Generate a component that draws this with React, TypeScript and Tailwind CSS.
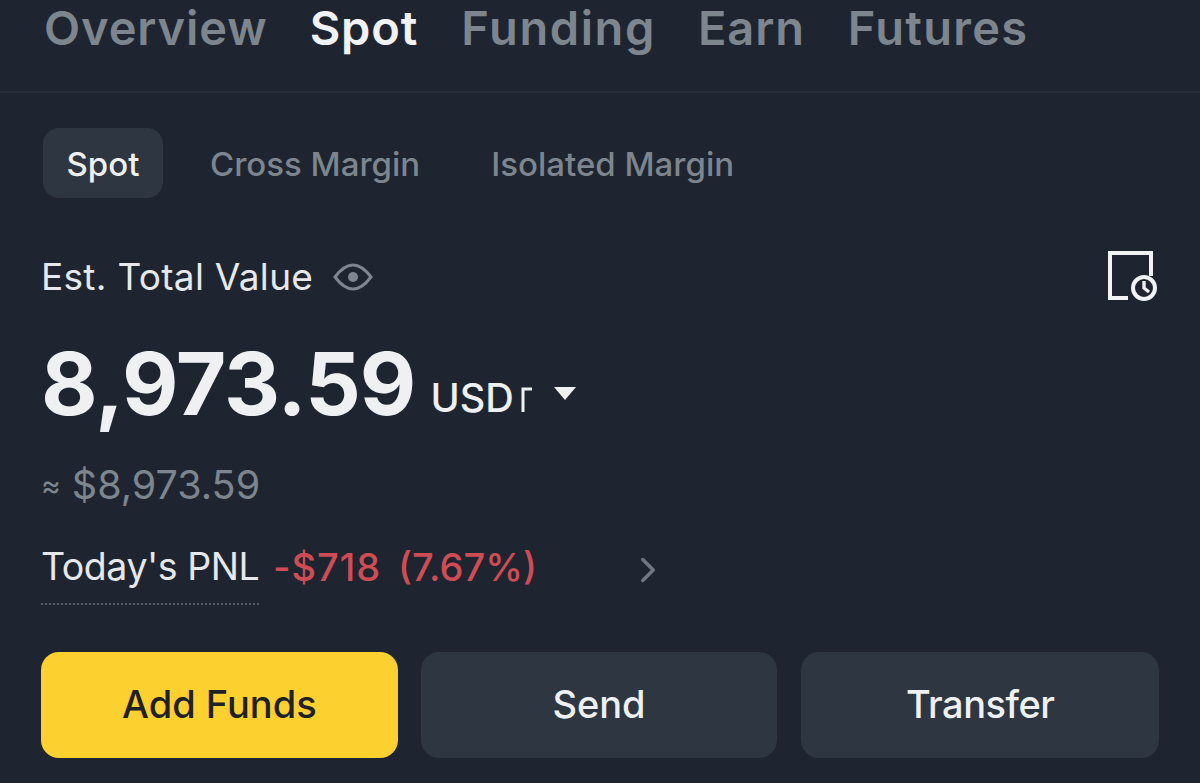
import { ChevronRight } from "lucide-react"

const mainTabs = [
  { label: "Overview", className: "tracking-[0.9px] text-[#7d858f]" },
  { label: "Spot", className: "-ml-[3px] tracking-[0.9px] text-[#f0f2f4]" },
  { label: "Funding", className: "-ml-[2px] tracking-[1.6px] text-[#7d858f]" },
  { label: "Earn", className: "-ml-[3px] tracking-[0.9px] text-[#7d858f]" },
  { label: "Futures", className: "-ml-[2px] tracking-[1.3px] text-[#7d858f]" },
]

export default function App() {
  return (
    <div className="h-[783px] w-[1200px] overflow-hidden bg-[#1e2530] font-['Inter',sans-serif]">
      {/* Top tabs */}
      <div className="flex h-[93px] gap-[45px] border-b-2 border-[#2a313c] pl-[44px] pt-[2px]">
        {mainTabs.map((tab) => (
          <div key={tab.label} className={`text-[47px] font-semibold leading-[52px] ${tab.className}`}>
            {tab.label}
          </div>
        ))}
      </div>

      <div className="px-[41px]">
        {/* Sub tabs */}
        <div className="mt-[35px] flex items-center pl-[2px]">
          <div className="flex h-[70px] w-[120px] items-center justify-center rounded-[16px] bg-[#2e3641] pt-[3px] text-[33px] font-medium text-[#eef0f2]">
            Spot
          </div>
          <div className="ml-[47px] pt-[3px] text-[33px] font-medium text-[#7d858f]">Cross Margin</div>
          <div className="ml-[71px] pt-[3px] text-[33px] font-medium text-[#7d858f]">Isolated Margin</div>
        </div>

        {/* Total value */}
        <div className="mt-[49px] flex h-[60px] items-center justify-between pr-[2px]">
          <div className="flex items-center gap-[20px]">
            <span className="text-[37px] leading-[60px] tracking-[0.3px] text-[#e6e8eb]">Est. Total Value</span>
            <svg width="40" height="28" viewBox="0 0 40 28" fill="none" stroke="#7d858f" strokeWidth="3">
              <path d="M2 14C8 6 14 2 20 2s12 4 18 12c-6 8-12 12-18 12S8 22 2 14z" />
              <circle cx="20" cy="14" r="5" fill="#7d858f" stroke="none" />
            </svg>
          </div>
          <svg width="50" height="54" viewBox="0 0 50 54" fill="none" stroke="#f0f2f4" strokeWidth="4">
            <path d="M44 26V3H3v45h18" />
            <circle cx="37" cy="38" r="11" />
            <path d="M37 31v7l5 4" strokeWidth="3.4" />
          </svg>
        </div>

        <div className="mt-[33px] flex h-[88px] items-end">
          <span className="text-[87px] font-bold leading-[88px] tracking-[-0.9px] text-[#eef0f2]">8,973.59</span>
          <span className="mb-[8px] ml-[15px] text-[39.5px] font-medium leading-[44px] text-[#eef0f2]">USD</span>
          <svg width="14" height="26" viewBox="0 0 14 26" className="mb-[16px] ml-[6px]" fill="none" stroke="#eef0f2" strokeWidth="3">
            <path d="M3 26V3h9" />
          </svg>
          <svg width="22" height="13" viewBox="0 0 22 13" className="mb-[28px] ml-[20px]">
            <path d="M0 0h22L11 13z" fill="#eef0f2" />
          </svg>
        </div>

        <div className="mt-[33px] flex items-center text-[39.5px] leading-[48px] text-[#7d858f]">
          <span className="mr-[11px] text-[30px]">≈</span>
          <span>$8,973.59</span>
        </div>

        {/* PNL */}
        <div className="mt-[33px] flex h-[63px] items-start">
          <span className="h-[63px] w-[218px] border-b-2 border-dotted border-[#565e69] text-[37.5px] leading-[50px] tracking-[-0.45px] whitespace-nowrap text-[#e6e8eb]">
            Today's PNL
          </span>
          <span className="ml-[14px] text-[38px] font-medium leading-[50px] tracking-[0.9px] text-[#cf4c55]">-$718</span>
          <span className="ml-[17px] text-[38px] font-medium leading-[50px] text-[#cf4c55]">(7.67%)</span>
          <ChevronRight className="ml-[90px] mt-[7px] h-[42px] w-[42px] text-[#6f7782]" strokeWidth={2} />
        </div>

        {/* Actions */}
        <div className="mt-[47px] flex gap-[23px]">
          <button className="h-[106px] w-[357px] rounded-[18px] bg-[#fcd02f] pb-[2px] text-[38px] font-medium text-[#1e2126]">
            Add Funds
          </button>
          <button className="h-[106px] w-[357px] rounded-[18px] bg-[#2e3641] pb-[2px] text-[38px] font-medium text-[#eef0f2]">
            Send
          </button>
          <button className="ml-[1px] h-[106px] w-[358px] rounded-[18px] bg-[#2e3641] pb-[2px] text-[38px] font-medium tracking-[-0.5px] text-[#eef0f2]">
            Transfer
          </button>
        </div>
      </div>
    </div>
  )
}
